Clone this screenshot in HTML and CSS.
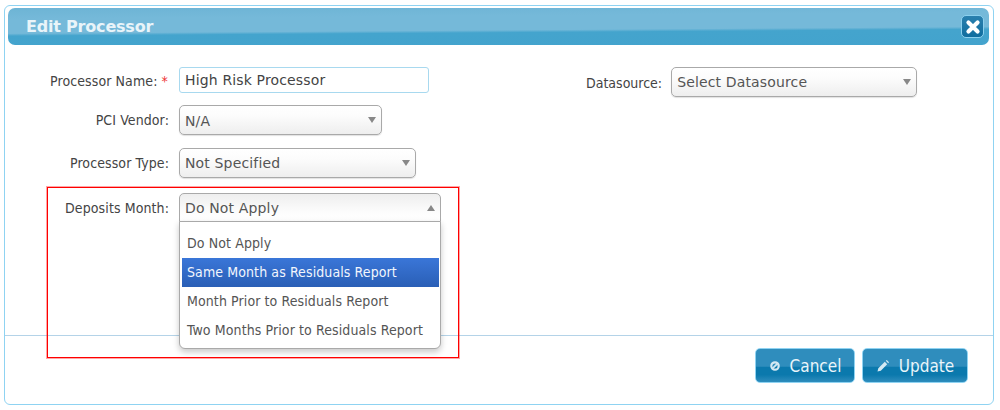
FILE: index.html
```html
<!DOCTYPE html>
<html lang="en">
<head>
<meta charset="utf-8">
<title>Edit Processor</title>
<link rel="stylesheet" href="styles.css">
</head>
<body>
<div class="dialog">
  <header class="titlebar">
    <h1 class="title">Edit Processor</h1>
    <button class="close" aria-label="Close">
      <svg width="16" height="16" viewBox="0 0 14 14"><path d="M3 3 L11 11 M11 3 L3 11" stroke="#fff" stroke-width="3.6" stroke-linecap="round"/></svg>
    </button>
  </header>
  <div class="form">
    <div class="col-left">
      <div class="row row-name">
        <label class="label">Processor Name: <span class="req">*</span></label>
        <div class="input w-name">High Risk Processor</div>
      </div>
      <div class="row row-pci">
        <label class="label">PCI Vendor:</label>
        <div class="select w-pci"><span>N/A</span><i class="arrow"></i></div>
      </div>
      <div class="row row-type">
        <label class="label">Processor Type:</label>
        <div class="select w-type"><span>Not Specified</span><i class="arrow"></i></div>
      </div>
      <div class="row row-dep">
        <label class="label label-dep">Deposits Month:</label>
        <div class="combo">
          <div class="select open"><span>Do Not Apply</span><i class="arrow up"></i></div>
          <ul class="menu">
            <li>Do Not Apply</li>
            <li class="active">Same Month as Residuals Report</li>
            <li>Month Prior to Residuals Report</li>
            <li>Two Months Prior to Residuals Report</li>
          </ul>
        </div>
      </div>
    </div>
    <div class="col-right">
      <label class="label label-ds">Datasource:</label>
      <div class="select w-ds"><span>Select Datasource</span><i class="arrow"></i></div>
    </div>
  </div>
  <footer class="footer">
    <button class="btn btn-cancel">
      <svg width="12" height="12" viewBox="0 0 12 12"><circle cx="6" cy="6" r="3.7" fill="none" stroke="#d5e9f3" stroke-width="2.2"/><path d="M3.6 8.4 L8.4 3.6" stroke="#d5e9f3" stroke-width="1.8"/></svg>
      Cancel
    </button>
    <button class="btn btn-update">
      <svg width="14" height="14" viewBox="0 0 14 14"><path d="M1.5 12.5 L2.3 9.2 L8.8 2.8 L11.2 5.2 L4.8 11.7 Z M9.8 1.8 L10.8 1 L13 3.2 L12.2 4.2 Z" fill="#d5e9f3"/></svg>
      Update
    </button>
  </footer>
  <div class="highlight"></div>
</div>
</body>
</html>
```
FILE: styles.css
```css
* { box-sizing: border-box; }
html, body { margin: 0; padding: 0; background: #fff; }
body {
  width: 1000px;
  height: 410px;
  padding: 5px 6px 5px 4px;
  font-family: "DejaVu Sans Condensed", "DejaVu Sans", sans-serif;
  font-size: 14px;
  color: #444;
  overflow: hidden;
}
.dialog {
  position: relative;
  height: 400px;
  border: 1px solid #8fd3f2;
  border-radius: 6px;
  padding: 2px 4px 2px 3px;
  background: #fff;
  display: flex;
  flex-direction: column;
}
.titlebar {
  height: 37px;
  flex: none;
  border-radius: 7px;
  background: linear-gradient(179.6deg, #6db4d5 0, #75b9d9 25%, #75b9d9 58%, #44a4cd 64%, #43a3cd 100%);
  display: flex;
  align-items: center;
  justify-content: space-between;
  padding: 0 5px 0 18px;
}
.title {
  margin: 0;
  font-size: 16px;
  font-weight: bold;
  color: #e9f4f9;
  font-family: "DejaVu Sans", sans-serif;
  letter-spacing: -0.2px;
}
.close {
  width: 23px;
  height: 23px;
  padding: 0;
  border: 1px solid #8cd0ee;
  border-radius: 5px;
  background: linear-gradient(#2a80ae, #0f6d9f);
  display: flex;
  align-items: center;
  justify-content: center;
}
.form {
  flex: none;
  height: 291px;
  display: flex;
  border-bottom: 1px solid #b4d3e8;
  margin: 0 -4px 0 -3px;
}
.col-left { width: 574px; padding-top: 22px; }
.col-right { display: flex; align-items: flex-start; padding-top: 22px; }
.row { display: flex; align-items: flex-start; }
.row-pci { margin-top: 10px; }
.row-type { margin-top: 13px; }
.row-dep { margin-top: 15px; }
.label {
  width: 174px;
  padding-right: 10px;
  text-align: right;
  letter-spacing: 0.1px;
  line-height: 30px;
  color: #444;
  flex: none;
  white-space: nowrap;
}
.row-name .label { padding-right: 11px; line-height: 28px; }
.label-dep { line-height: 30px; }
.label-ds { width: auto; padding-right: 9px; margin-left: 7px; line-height: 32px; letter-spacing: 0; }
.req { color: #e33; }
.input {
  height: 26px;
  border: 1px solid #a8d9ef;
  border-radius: 3px;
  padding-left: 5px;
  line-height: 25px;
  font-family: "DejaVu Sans", sans-serif;
  font-size: 14px;
  letter-spacing: 0.15px;
  color: #444;
  background: #fff;
}
.w-name { width: 250px; }
.select {
  position: relative;
  height: 30px;
  border: 1px solid #a9a9a9;
  border-radius: 5px;
  padding-left: 5px;
  line-height: 29px;
  font-family: "DejaVu Sans", sans-serif;
  font-size: 14px;
  letter-spacing: 0.15px;
  color: #555;
  background: linear-gradient(#fff, #fcfcfc 35%, #eee);
  box-shadow: 0 1px 1px rgba(0,0,0,.12);
}
.w-pci { width: 203px; line-height: 31px; }
.w-type { width: 237px; }
.w-ds { width: 246px; }
.arrow {
  position: absolute;
  right: 5px;
  top: 11px;
  width: 0;
  height: 0;
  border-left: 4px solid transparent;
  border-right: 4px solid transparent;
  border-top: 6px solid #888;
}
.arrow.up { border-top: 0; border-bottom: 6px solid #888; }
.combo { position: relative; width: 262px; }
.select.open {
  border-radius: 5px 5px 0 0;
  height: 29px;
  box-shadow: none;
  background: linear-gradient(#eee, #fdfdfd 70%, #fff);
}
.menu {
  position: absolute;
  z-index: 2;
  left: 0;
  right: 0;
  top: 28px;
  margin: 0;
  padding: 7px 1px 3px 2px;
  list-style: none;
  background: #fff;
  border: 1px solid #a9a9a9;
  border-radius: 0 0 6px 6px;
  box-shadow: 0 3px 6px rgba(0,0,0,.22);
  font-family: "DejaVu Sans Condensed", "DejaVu Sans", sans-serif;
  letter-spacing: 0.1px;
}
.menu li {
  height: 29px;
  line-height: 29px;
  padding-left: 5px;
  color: #555;
  white-space: nowrap;
}
.menu li.active {
  color: #f2f6fd;
  background: linear-gradient(#3a76d8, #2a5fb6);
}
.footer {
  display: flex;
  justify-content: flex-end;
  gap: 7px;
  padding: 12px 21px 0 0;
}
.btn {
  height: 35px;
  border: 1px solid #8fd3f2;
  border-radius: 5px;
  background: linear-gradient(#2f8dbd 0, #2f8dbd 52%, #0b79ad 56%, #0b79ad 78%, #2f8dbd 100%);
  color: #eaf5fa;
  font-family: "DejaVu Sans Condensed", "DejaVu Sans", sans-serif;
  font-size: 17px;
  display: flex;
  align-items: center;
  justify-content: center;
  gap: 9px;
  padding: 0;
}
.btn-cancel { width: 100px; }
.btn-update { width: 106px; }
.highlight {
  position: absolute;
  z-index: 3;
  left: 42px;
  top: 181px;
  width: 412px;
  height: 171px;
  border: 1px solid #f00;
  box-shadow: 0 0 0 1px rgba(255,0,0,.35);
  pointer-events: none;
}
```
